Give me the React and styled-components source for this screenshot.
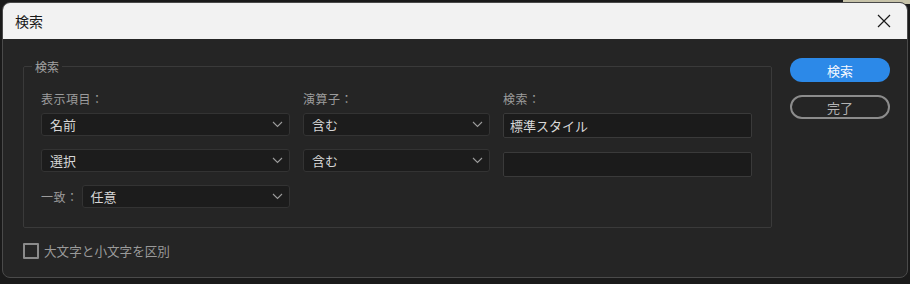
import styled, { createGlobalStyle } from 'styled-components';

const GlobalStyle = createGlobalStyle`
	html, body {
		margin: 0;
		padding: 0;
		width: 910px;
		height: 284px;
		overflow: hidden;
		background: linear-gradient(90deg, #1a1a1a 0, #1a1a1a 843px, #c7c3a9 843px);
		font-family: "Noto Sans CJK JP", "Noto Sans", sans-serif;
	}
`;

const Screen = styled.div`
	width: 910px;
	height: 284px;
	background: linear-gradient(180deg, transparent 0, transparent 4px, #1a1a1a 4px);
	padding: 2px 2px 0 2px;
	box-sizing: border-box;
`;

const Window = styled.div`
	width: 906px;
	height: 276px;
	box-sizing: border-box;
	border: 1px solid #4a4a4a;
	border-radius: 8px;
	overflow: hidden;
	background: #252525;
	display: flex;
	flex-direction: column;
`;

const TitleBar = styled.div`
	height: 36px;
	background: #f2f2f2;
	display: flex;
	align-items: center;
	justify-content: space-between;
	padding: 0 14px 0 12px;
	color: #1a1a1a;
	font-size: 14px;
`;

const CloseButton = styled.button`
	width: 18px;
	height: 18px;
	padding: 0;
	border: 0;
	background: none;
	display: flex;
	align-items: center;
	justify-content: center;
`;

const Body = styled.div`
	flex: 1;
	display: flex;
	align-items: flex-start;
	padding: 19px 16px 0 20px;
	gap: 18px;
`;

const LeftColumn = styled.div`
	display: flex;
	flex-direction: column;
`;

const Fieldset = styled.fieldset`
	margin: 0;
	width: 749px;
	height: 170px;
	box-sizing: border-box;
	border: 1px solid #3a3a3a;
	border-radius: 2px;
	padding: 17px 18px 0 17px;
`;

const Legend = styled.legend`
	color: #a3a3a3;
	font-size: 12px;
	padding: 0 3px;
	margin-left: -9px;
`;

const Grid = styled.div`
	display: grid;
	grid-template-columns: 249px 187px 249px;
	column-gap: 13px;
	align-items: start;
`;

const Label = styled.div`
	color: #9c9c9c;
	font-size: 12px;
	line-height: 14px;
	height: 14px;
	margin-bottom: 7px;
	letter-spacing: 0.5px;
`;

const Select = styled.div`
	height: 23px;
	box-sizing: border-box;
	background: #1c1c1c;
	border: 1px solid #333;
	border-radius: 3px;
	display: flex;
	align-items: center;
	justify-content: space-between;
	padding: 0 6px 0 8px;
	color: #d6d6d6;
	font-size: 13px;
	margin-top: ${(p) => p.$top || 0}px;
	flex: ${(p) => (p.$grow ? 1 : 'none')};
`;

const Input = styled.div`
	height: 25px;
	box-sizing: border-box;
	background: #1b1b1b;
	border: 1px solid #3a3a3a;
	border-radius: 2px;
	display: flex;
	align-items: center;
	padding: 0 6px;
	color: #d8d8d8;
	font-size: 13px;
	margin-top: ${(p) => p.$top || 0}px;
`;

const MatchRow = styled.div`
	display: flex;
	align-items: center;
	gap: 3px;
	margin-top: 8px;
	grid-column: 1;
`;

const MatchLabel = styled.span`
	color: #9c9c9c;
	font-size: 12px;
	letter-spacing: 0.5px;
`;

const CheckRow = styled.label`
	display: flex;
	align-items: center;
	gap: 5px;
	margin-top: 13px;
	color: #9a9a9a;
	font-size: 12.6px;
`;

const Box = styled.span`
	width: 16px;
	height: 16px;
	box-sizing: border-box;
	border: 2px solid #8a8a8a;
	border-radius: 1px;
`;

const ButtonColumn = styled.div`
	display: flex;
	flex-direction: column;
	gap: 13px;
`;

const PillButton = styled.button`
	width: 100px;
	height: 24px;
	border-radius: 12px;
	box-sizing: border-box;
	font-family: inherit;
	font-size: 13px;
	padding: 0;
	background: ${(p) => (p.$primary ? '#2c89e8' : 'transparent')};
	border: ${(p) => (p.$primary ? '0' : '2px solid #8c8c8c')};
	color: ${(p) => (p.$primary ? '#f5f8ff' : '#b3b3b3')};
`;

const Chevron = () => (
	<svg width="11" height="7" viewBox="0 0 11 7" fill="none">
		<path d="M1 1l4.5 4.5L10 1" stroke="#9a9a9a" strokeWidth="1.1" />
	</svg>
);

export default function App() {
	return (
		<>
			<GlobalStyle />
			<Screen>
				<Window>
					<TitleBar>
						<span>検索</span>
						<CloseButton aria-label="close">
							<svg width="14" height="14" viewBox="0 0 14 14">
								<path d="M1 1l12 12M13 1L1 13" stroke="#1a1a1a" strokeWidth="1.2" />
							</svg>
						</CloseButton>
					</TitleBar>
					<Body>
						<LeftColumn>
							<Fieldset>
								<Legend>検索</Legend>
								<Grid>
									<div>
										<Label>表示項目：</Label>
										<Select>名前<Chevron /></Select>
										<Select $top={13}>選択<Chevron /></Select>
									</div>
									<div>
										<Label>演算子：</Label>
										<Select>含む<Chevron /></Select>
										<Select $top={13}>含む<Chevron /></Select>
									</div>
									<div>
										<Label>検索：</Label>
										<Input>標準スタイル</Input>
										<Input $top={14}></Input>
									</div>
									<MatchRow>
										<MatchLabel>一致：</MatchLabel>
										<Select $grow>任意<Chevron /></Select>
									</MatchRow>
								</Grid>
							</Fieldset>
							<CheckRow>
								<Box />
								大文字と小文字を区別
							</CheckRow>
						</LeftColumn>
						<ButtonColumn>
							<PillButton $primary>検索</PillButton>
							<PillButton>完了</PillButton>
						</ButtonColumn>
					</Body>
				</Window>
			</Screen>
		</>
	);
}
